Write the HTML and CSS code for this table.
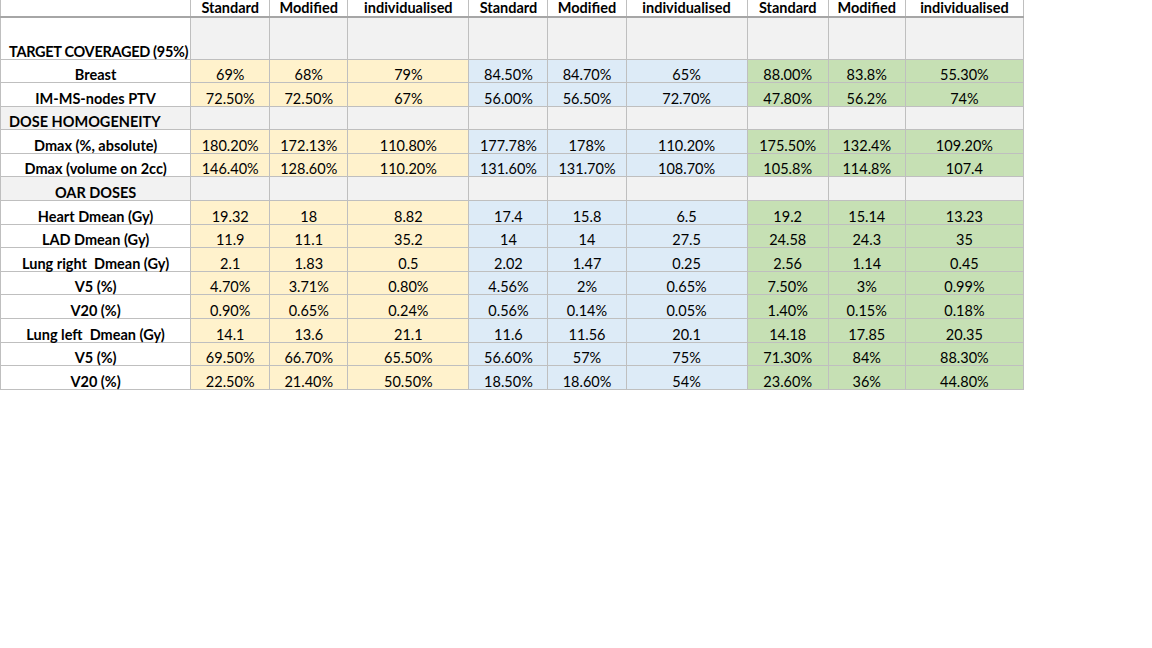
FILE: index.html
```html
<!DOCTYPE html>
<html>
<head>
<meta charset="utf-8">
<link rel="stylesheet" href="styles.css">
</head>
<body>
<table class="sheet">
  <colgroup>
    <col class="c-label"><col class="c-s"><col class="c-m"><col class="c-i">
    <col class="c-s"><col class="c-m"><col class="c-i">
    <col class="c-s2"><col class="c-m2"><col class="c-i2">
  </colgroup>
  <thead>
    <tr class="head">
      <th></th>
      <th>Standard</th><th>Modified</th><th>individualised</th>
      <th>Standard</th><th>Modified</th><th>individualised</th>
      <th>Standard</th><th>Modified</th><th>individualised</th>
    </tr>
  </thead>
  <tbody>
    <tr class="target">
      <th class="lbl left tight">TARGET COVERAGED (95%)</th>
      <td class="g"></td><td class="g"></td><td class="g"></td><td class="g"></td><td class="g"></td><td class="g"></td><td class="g"></td><td class="g"></td><td class="g"></td>
    </tr>
    <tr>
      <th class="lbl">Breast</th>
      <td class="y">69%</td><td class="y">68%</td><td class="y">79%</td>
      <td class="b">84.50%</td><td class="b">84.70%</td><td class="b">65%</td>
      <td class="gr">88.00%</td><td class="gr">83.8%</td><td class="gr">55.30%</td>
    </tr>
    <tr>
      <th class="lbl">IM-MS-nodes PTV</th>
      <td class="y">72.50%</td><td class="y">72.50%</td><td class="y">67%</td>
      <td class="b">56.00%</td><td class="b">56.50%</td><td class="b">72.70%</td>
      <td class="gr">47.80%</td><td class="gr">56.2%</td><td class="gr">74%</td>
    </tr>
    <tr class="section">
      <th class="lbl left g">DOSE HOMOGENEITY</th>
      <td class="g"></td><td class="g"></td><td class="g"></td><td class="g"></td><td class="g"></td><td class="g"></td><td class="g"></td><td class="g"></td><td class="g"></td>
    </tr>
    <tr>
      <th class="lbl">Dmax (%, absolute)</th>
      <td class="y">180.20%</td><td class="y">172.13%</td><td class="y">110.80%</td>
      <td class="b">177.78%</td><td class="b">178%</td><td class="b">110.20%</td>
      <td class="gr">175.50%</td><td class="gr">132.4%</td><td class="gr">109.20%</td>
    </tr>
    <tr>
      <th class="lbl">Dmax (volume on 2cc)</th>
      <td class="y">146.40%</td><td class="y">128.60%</td><td class="y">110.20%</td>
      <td class="b">131.60%</td><td class="b">131.70%</td><td class="b">108.70%</td>
      <td class="gr">105.8%</td><td class="gr">114.8%</td><td class="gr">107.4</td>
    </tr>
    <tr class="section">
      <th class="lbl g">OAR DOSES</th>
      <td class="g"></td><td class="g"></td><td class="g"></td><td class="g"></td><td class="g"></td><td class="g"></td><td class="g"></td><td class="g"></td><td class="g"></td>
    </tr>
    <tr>
      <th class="lbl">Heart Dmean (Gy)</th>
      <td class="y">19.32</td><td class="y">18</td><td class="y">8.82</td>
      <td class="b">17.4</td><td class="b">15.8</td><td class="b">6.5</td>
      <td class="gr">19.2</td><td class="gr">15.14</td><td class="gr">13.23</td>
    </tr>
    <tr>
      <th class="lbl">LAD Dmean (Gy)</th>
      <td class="y">11.9</td><td class="y">11.1</td><td class="y">35.2</td>
      <td class="b">14</td><td class="b">14</td><td class="b">27.5</td>
      <td class="gr">24.58</td><td class="gr">24.3</td><td class="gr">35</td>
    </tr>
    <tr>
      <th class="lbl">Lung right&nbsp; Dmean (Gy)</th>
      <td class="y">2.1</td><td class="y">1.83</td><td class="y">0.5</td>
      <td class="b">2.02</td><td class="b">1.47</td><td class="b">0.25</td>
      <td class="gr">2.56</td><td class="gr">1.14</td><td class="gr">0.45</td>
    </tr>
    <tr>
      <th class="lbl">V5 (%)</th>
      <td class="y">4.70%</td><td class="y">3.71%</td><td class="y">0.80%</td>
      <td class="b">4.56%</td><td class="b">2%</td><td class="b">0.65%</td>
      <td class="gr">7.50%</td><td class="gr">3%</td><td class="gr">0.99%</td>
    </tr>
    <tr>
      <th class="lbl">V20 (%)</th>
      <td class="y">0.90%</td><td class="y">0.65%</td><td class="y">0.24%</td>
      <td class="b">0.56%</td><td class="b">0.14%</td><td class="b">0.05%</td>
      <td class="gr">1.40%</td><td class="gr">0.15%</td><td class="gr">0.18%</td>
    </tr>
    <tr>
      <th class="lbl">Lung left&nbsp; Dmean (Gy)</th>
      <td class="y">14.1</td><td class="y">13.6</td><td class="y">21.1</td>
      <td class="b">11.6</td><td class="b">11.56</td><td class="b">20.1</td>
      <td class="gr">14.18</td><td class="gr">17.85</td><td class="gr">20.35</td>
    </tr>
    <tr>
      <th class="lbl">V5 (%)</th>
      <td class="y">69.50%</td><td class="y">66.70%</td><td class="y">65.50%</td>
      <td class="b">56.60%</td><td class="b">57%</td><td class="b">75%</td>
      <td class="gr">71.30%</td><td class="gr">84%</td><td class="gr">88.30%</td>
    </tr>
    <tr>
      <th class="lbl">V20 (%)</th>
      <td class="y">22.50%</td><td class="y">21.40%</td><td class="y">50.50%</td>
      <td class="b">18.50%</td><td class="b">18.60%</td><td class="b">54%</td>
      <td class="gr">23.60%</td><td class="gr">36%</td><td class="gr">44.80%</td>
    </tr>
  </tbody>
</table>
</body>
</html>
```

FILE: styles.css
```css
html, body {
  margin: 0;
  padding: 0;
  background: #ffffff;
}

body {
  font-family: Lato, "Liberation Sans", sans-serif;
  font-size: 14.5px;
  color: #000000;
}

.sheet {
  border-collapse: collapse;
  table-layout: fixed;
  width: 1024px;
}

.c-label { width: 190px; }
.c-s { width: 79px; }
.c-m { width: 78px; }
.c-i { width: 121px; }
.c-s2 { width: 81px; }
.c-m2 { width: 77px; }
.c-i2 { width: 118px; }

.sheet th,
.sheet td {
  border: 1px solid #bfbfbf;
  padding: 0 2px 0;
  text-align: center;
  vertical-align: bottom;
  white-space: nowrap;
  overflow: visible;
  line-height: 15px;
  box-sizing: border-box;
}

.sheet th {
  font-weight: 700;
}

.sheet td {
  font-weight: 400;
}

.head th {
  border-top: none;
  border-bottom: 2px solid #a6a6a6;
  height: 17px;
  padding: 0 2px;
  line-height: 16px;
  vertical-align: top;
}

.target th,
.target td {
  height: 42px;
  padding-bottom: 0;
}

.sheet tbody tr {
  height: 23.6px;
}

.sheet .left {
  text-align: left;
  padding-left: 8px;
}

.sheet .tight {
  letter-spacing: -0.3px;
}

.y { background: #fff2cc; }
.b { background: #ddebf7; }
.gr { background: #c6e0b4; }
.g { background: #f2f2f2; }
```
